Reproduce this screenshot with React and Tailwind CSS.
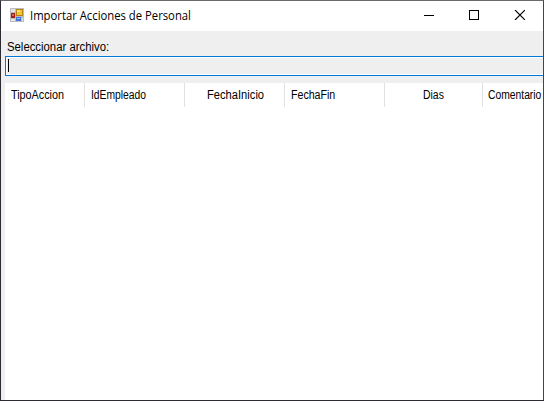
import React from "react";

const columns = [
  { label: "TipoAccion", box: "w-20 pl-[6px]", text: "scale-x-[0.9]" },
  { label: "IdEmpleado", box: "w-[100px] pl-[6px]", text: "scale-x-[0.86]" },
  { label: "FechaInicio", box: "w-[100px] pl-[22px]", text: "scale-x-[0.93]" },
  { label: "FechaFin", box: "w-[100px] pl-[6px]", text: "scale-x-[0.885]" },
  { label: "Dias", box: "w-[98px] pl-[38px]", text: "scale-x-[0.87]" },
  { label: "Comentario", box: "w-[61px] pl-[5px]", text: "scale-x-[0.86]", last: true },
];

function AppIcon() {
  return (
    <svg className="mb-0.5" width="14" height="14" viewBox="0 0 14 14" shapeRendering="crispEdges">
      <rect width="14" height="14" fill="#bdbdbd" />
      <rect x="1" y="1" width="4" height="3" fill="#e4e4e4" />
      <rect x="1" y="11" width="4" height="2" fill="#e4e4e4" />
      <rect x="12" y="10" width="1" height="3" fill="#e4e4e4" />
      <rect x="6" y="1" width="7" height="7" fill="#b98314" />
      <rect x="7" y="2" width="5" height="5" fill="#f5c33a" />
      <rect x="7" y="2" width="3" height="2" fill="#ffe08a" />
      <rect x="1" y="5" width="4" height="5" fill="#a61c12" />
      <rect x="2" y="6" width="2" height="2" fill="#d9644f" />
      <rect x="6" y="9" width="5" height="4" fill="#3f76d6" />
      <rect x="7" y="10" width="3" height="1" fill="#8fb8f5" />
    </svg>
  );
}

export default function App() {
  return (
    <div className="flex h-[401px] w-[544px] flex-col overflow-hidden border border-t-[#6a6a6e] border-r-[#454547] border-b-[#2c2b33] border-l-[#2c2b33] bg-[#efefef] text-black">
      <header className="flex h-[30px] shrink-0 items-center bg-white pl-[9px] pr-[18px]">
        <AppIcon />
        <h1 className="ml-[6px] flex-1 origin-left scale-x-[0.94] whitespace-nowrap font-['Open_Sans','Noto_Sans',sans-serif] text-[12px] leading-4">
          Importar Acciones de Personal
        </h1>
        <div className="mb-0.5 flex items-center gap-[35px]">
          <svg width="10" height="10" viewBox="0 0 10 10" shapeRendering="crispEdges">
            <rect y="5" width="10" height="1" />
          </svg>
          <svg width="10" height="10" viewBox="0 0 10 10" fill="none" stroke="black">
            <rect x="0.5" y="0.5" width="9" height="9" />
          </svg>
          <svg width="11" height="10" viewBox="0 0 11 10" fill="none" stroke="black" strokeWidth="1.15">
            <path d="M1 0L11 10M11 0L1 10" />
          </svg>
        </div>
      </header>
      <main className="flex flex-1 flex-col pl-1 font-['Liberation_Sans',Arial,sans-serif] text-[12px] leading-4">
        <label className="mt-2 h-[17px] shrink-0 pl-[2px]">
          <span className="inline-block origin-left scale-x-[0.945] whitespace-nowrap">Seleccionar archivo:</span>
        </label>
        <div className="flex h-5 shrink-0 border border-r-0 border-[#0078d7]">
          <div className="flex flex-1 items-start border border-r-0 border-white pl-px">
            <span className="mt-px h-[13px] w-px bg-black" />
          </div>
        </div>
        <section className="mt-[7px] flex-1 bg-white">
          <div className="flex h-6">
            {columns.map((c) => (
              <div key={c.label} className={`flex shrink-0 items-center border-r ${c.last ? "border-transparent" : "border-[#e2e2e2]"} ${c.box}`}>
                <span className={`origin-left whitespace-nowrap ${c.text}`}>{c.label}</span>
              </div>
            ))}
          </div>
        </section>
      </main>
    </div>
  );
}
